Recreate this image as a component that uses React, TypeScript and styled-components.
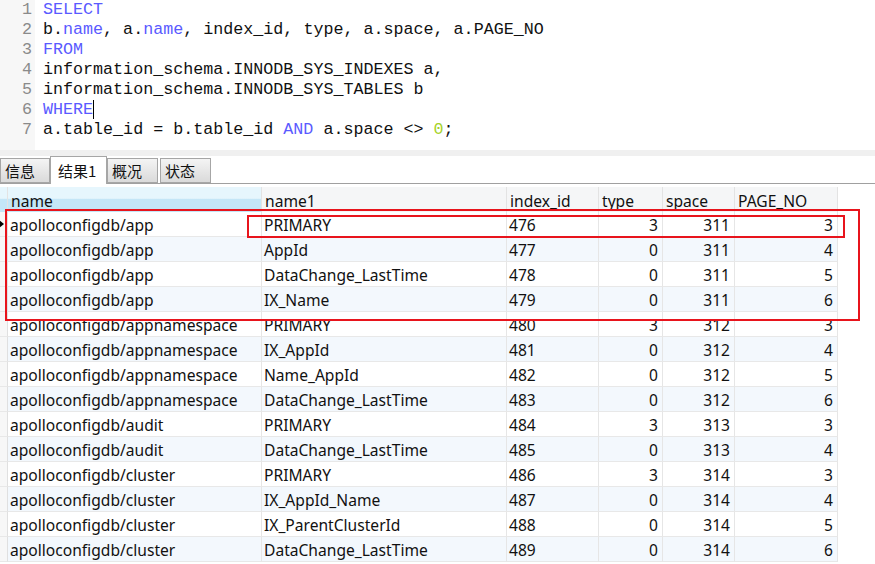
import React from "react";
import styled, { createGlobalStyle } from "styled-components";

const Global = createGlobalStyle`
  html, body { margin: 0; padding: 0; background: #ffffff; }
  body { width: 875px; height: 564px; overflow: hidden; }
`;

const Page = styled.div`
  width: 875px;
  height: 564px;
  position: relative;
  display: flex;
  flex-direction: column;
  background: #fff;
  overflow: hidden;
`;

const Editor = styled.div`
  height: 150px;
  display: flex;
  background: #fff;
`;

const Gutter = styled.div`
  width: 32px;
  background: #f7f7f7;
  display: flex;
  flex-direction: column;
  align-items: flex-end;
  padding-right: 3px;
`;

const LineNo = styled.div`
  height: 20px;
  line-height: 19px;
  font-family: "Liberation Mono", monospace;
  font-size: 16.7px;
  color: #8a8a8a;
`;

const Code = styled.div`
  flex: 1;
  padding-left: 8px;
  display: flex;
  flex-direction: column;
`;

const Line = styled.div`
  height: 20px;
  line-height: 19px;
  font-family: "Liberation Mono", monospace;
  font-size: 16.7px;
  color: #111;
  white-space: pre;
  position: relative;
`;

const Kw = styled.span`
  color: #5a5aff;
`;

const Num = styled.span`
  color: #a6d22a;
`;

const Caret = styled.span`
  display: inline-block;
  width: 1px;
  height: 19px;
  background: #000;
  vertical-align: top;
`;

const Strip = styled.div`
  height: 6px;
  background: #f0f0f0;
`;

const TabBar = styled.div`
  height: 27px;
  display: flex;
  align-items: flex-end;
  border-bottom: 1px solid #a0a0a0;
  background: #fff;
`;

const Tab = styled.div<{ $active?: boolean; $w: number; $gap?: boolean }>`
  box-sizing: border-box;
  height: ${(p) => (p.$active ? "28px" : "25px")};
  margin-bottom: ${(p) => (p.$active ? "-1px" : "0")};
  width: ${(p) => p.$w}px;
  padding-left: ${(p) => (p.$active ? "7px" : "4px")};
  border: 1px solid #a6a6a6;
  border-bottom: ${(p) => (p.$active ? "none" : "1px solid #a6a6a6")};
  margin-right: ${(p) => (p.$gap ? 2 : 0)}px;
  background: ${(p) =>
    p.$active ? "#ffffff" : "linear-gradient(#f4f4f4, #dadada)"};
  font-family: "Noto Sans CJK SC", "Noto Sans", sans-serif;
  font-size: 15px;
  line-height: 23px;
  color: #111;
  display: flex;
  align-items: center;
`;

const Grid = styled.div`
  margin-top: 3px;
  display: grid;
  grid-template-columns: 8px 254px 245px 92px 64px 72px 103px;
  width: 838px;
  font-family: "Noto Sans", "Open Sans", sans-serif;
  font-size: 15.6px;
  color: #111;
`;

const HeadCell = styled.div<{ $sel?: boolean; $bare?: boolean }>`
  height: 25px;
  box-sizing: border-box;
  padding-left: ${(p) => (p.$bare ? 0 : 3)}px;
  line-height: 29px;
  border-right: 1px solid #e3e3e3;
  background: ${(p) =>
    p.$sel
      ? "linear-gradient(#e6f6fd 0%, #e6f6fd 45%, #c4e6f7 50%, #c4e6f7 100%)"
      : "#f5f6f7"};
  overflow: hidden;
  white-space: nowrap;
`;

const Cell = styled.div<{ $alt?: boolean; $right?: boolean }>`
  height: 25px;
  box-sizing: border-box;
  border-right: 1px solid #e6e6e6;
  border-bottom: 1px solid #e8e8e8;
  background: ${(p) => (p.$alt ? "#f3f8fd" : "#ffffff")};
  padding: ${(p) => (p.$right ? "0 4px 0 0" : "0 0 0 2px")};
  text-align: ${(p) => (p.$right ? "right" : "left")};
  line-height: 26px;
  white-space: nowrap;
  overflow: hidden;
`;

const Indicator = styled.div`
  height: 25px;
  box-sizing: border-box;
  border-right: 1px solid #e0e0e0;
  border-bottom: 1px solid #e8e8e8;
  background: #f7f7f7;
  display: flex;
  align-items: center;
`;

const Arrow = styled.span`
  width: 0;
  height: 0;
  border-top: 4px solid transparent;
  border-bottom: 4px solid transparent;
  border-left: 5px solid #000;
  margin-left: -1px;
`;

const RedBox = styled.div<{ $l: number; $t: number; $w: number; $h: number }>`
  position: absolute;
  left: ${(p) => p.$l}px;
  top: ${(p) => p.$t}px;
  width: ${(p) => p.$w}px;
  height: ${(p) => p.$h}px;
  box-sizing: border-box;
  border: 2px solid #e8141c;
  pointer-events: none;
`;

const rows: [string, string, number, number, number, number][] = [
  ["apolloconfigdb/app", "PRIMARY", 476, 3, 311, 3],
  ["apolloconfigdb/app", "AppId", 477, 0, 311, 4],
  ["apolloconfigdb/app", "DataChange_LastTime", 478, 0, 311, 5],
  ["apolloconfigdb/app", "IX_Name", 479, 0, 311, 6],
  ["apolloconfigdb/appnamespace", "PRIMARY", 480, 3, 312, 3],
  ["apolloconfigdb/appnamespace", "IX_AppId", 481, 0, 312, 4],
  ["apolloconfigdb/appnamespace", "Name_AppId", 482, 0, 312, 5],
  ["apolloconfigdb/appnamespace", "DataChange_LastTime", 483, 0, 312, 6],
  ["apolloconfigdb/audit", "PRIMARY", 484, 3, 313, 3],
  ["apolloconfigdb/audit", "DataChange_LastTime", 485, 0, 313, 4],
  ["apolloconfigdb/cluster", "PRIMARY", 486, 3, 314, 3],
  ["apolloconfigdb/cluster", "IX_AppId_Name", 487, 0, 314, 4],
  ["apolloconfigdb/cluster", "IX_ParentClusterId", 488, 0, 314, 5],
  ["apolloconfigdb/cluster", "DataChange_LastTime", 489, 0, 314, 6],
];

export default function App() {
  return (
    <Page>
      <Global />
      <Editor>
        <Gutter>
          {[1, 2, 3, 4, 5, 6, 7].map((n) => (
            <LineNo key={n}>{n}</LineNo>
          ))}
        </Gutter>
        <Code>
          <Line>
            <Kw>SELECT</Kw>
          </Line>
          <Line>
            b.<Kw>name</Kw>, a.<Kw>name</Kw>, index_id, type, a.space, a.PAGE_NO
          </Line>
          <Line>
            <Kw>FROM</Kw>
          </Line>
          <Line>information_schema.INNODB_SYS_INDEXES a,</Line>
          <Line>information_schema.INNODB_SYS_TABLES b</Line>
          <Line>
            <Kw>WHERE</Kw>
            <Caret />
          </Line>
          <Line>
            a.table_id = b.table_id <Kw>AND</Kw> a.space {"<>"} <Num>0</Num>;
          </Line>
        </Code>
      </Editor>
      <Strip />
      <TabBar>
        <Tab $w={50}>信息</Tab>
        <Tab $w={57} $active>
          结果1
        </Tab>
        <Tab $w={51} $gap>
          概况
        </Tab>
        <Tab $w={51}>状态</Tab>
      </TabBar>
      <Grid>
        <HeadCell $sel $bare />
        <HeadCell $sel>name</HeadCell>
        <HeadCell>name1</HeadCell>
        <HeadCell>index_id</HeadCell>
        <HeadCell>type</HeadCell>
        <HeadCell>space</HeadCell>
        <HeadCell>PAGE_NO</HeadCell>
        {rows.map((r, i) => {
          const alt = i % 2 === 1;
          return (
            <React.Fragment key={i}>
              <Indicator>{i === 0 ? <Arrow /> : null}</Indicator>
              <Cell $alt={alt}>{r[0]}</Cell>
              <Cell $alt={alt}>{r[1]}</Cell>
              <Cell $alt={alt}>{r[2]}</Cell>
              <Cell $alt={alt} $right>
                {r[3]}
              </Cell>
              <Cell $alt={alt} $right>
                {r[4]}
              </Cell>
              <Cell $alt={alt} $right>
                {r[5]}
              </Cell>
            </React.Fragment>
          );
        })}
      </Grid>
      <RedBox $l={5} $t={209} $w={855} $h={112} />
      <RedBox $l={247} $t={215} $w={598} $h={23} />
    </Page>
  );
}
